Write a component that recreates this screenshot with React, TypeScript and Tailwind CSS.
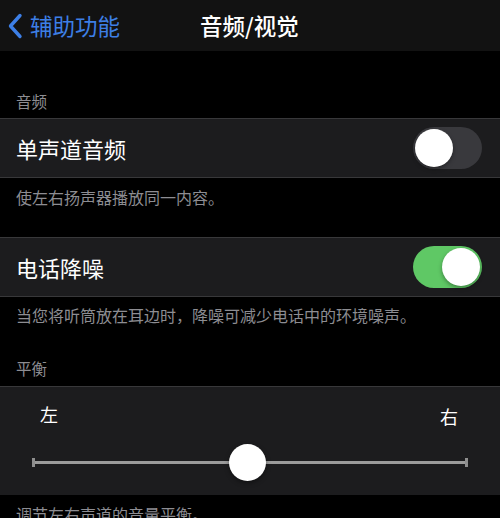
import React from 'react';

const font = { fontFamily: '"Noto Sans CJK SC", "Noto Sans", sans-serif' };

function Toggle({ on }: { on: boolean }) {
  return (
    <div
      className={`w-[69px] h-[42px] rounded-full p-[2px] flex items-center ${
        on ? 'bg-[#5fc865] justify-end' : 'bg-[#39393d] justify-start'
      }`}
    >
      <div className="w-[38px] h-[38px] rounded-full bg-white shadow-[0_2px_4px_rgba(0,0,0,0.35)]" />
    </div>
  );
}

function SwitchRow({ label, on }: { label: string; on: boolean }) {
  return (
    <div className="h-[60px] bg-[#1c1c1e] border-y border-[#38383a] flex items-center justify-between pl-4 pr-[18px]">
      <span className="text-[22px] text-white leading-none">{label}</span>
      <Toggle on={on} />
    </div>
  );
}

export default function App() {
  return (
    <div className="w-[500px] h-[518px] bg-black overflow-hidden" style={font}>
      {/* Nav bar */}
      <div className="h-[51px] bg-[#121212] flex items-center relative">
        <div className="flex items-center pl-[7px] gap-[6px] text-[#3d7fe6]">
          <svg width="17" height="26" viewBox="0 0 17 26" fill="none">
            <path d="M13 2.5L3.5 13L13 23.5" stroke="currentColor" strokeWidth="3.4" strokeLinecap="round" strokeLinejoin="round" />
          </svg>
          <span className="text-[22.5px] leading-none">辅助功能</span>
        </div>
        <span className="absolute left-[200px] text-[22.5px] font-medium text-white leading-none">音频/视觉</span>
      </div>

      {/* Audio section */}
      <div className="h-[67px] flex items-end pl-4 pb-[7px]">
        <span className="text-[15.5px] text-[#8d8d92] leading-5">音频</span>
      </div>
      <SwitchRow label="单声道音频" on={false} />
      <div className="h-[59px] pl-4 pt-[7px]">
        <span className="text-[16px] text-[#8d8d92] leading-5">使左右扬声器播放同一内容。</span>
      </div>
      <SwitchRow label="电话降噪" on={true} />
      <div className="h-[89px] pl-4 pt-[8px] flex flex-col justify-between pb-[8px]">
        <span className="text-[16px] text-[#8d8d92] leading-5">当您将听筒放在耳边时，降噪可减少电话中的环境噪声。</span>
        <span className="text-[15.5px] text-[#8d8d92] leading-5">平衡</span>
      </div>

      {/* Balance slider */}
      <div className="h-[109px] bg-[#1c1c1e] border-t border-[#38383a] flex flex-col px-[32px]">
        <div className="flex justify-between pt-[15px] px-[8px] text-[18px] text-white leading-6">
          <span>左</span>
          <span className="pt-[2px] pr-[2px]">右</span>
        </div>
        <div className="relative mt-[16px] h-[37px] flex items-center">
          <div className="w-[3px] h-[9px] bg-[#8e8e8e]" />
          <div className="flex-1 h-[3px] bg-[#9b9b9b]" />
          <div className="w-[3px] h-[9px] bg-[#8e8e8e]" />
          <div className="absolute left-[197px] top-0 w-[37px] h-[37px] rounded-full bg-white shadow-[0_2px_5px_rgba(0,0,0,0.4)]" />
        </div>
      </div>
      <div className="pl-4 pt-[7px]">
        <span className="text-[16px] text-[#8d8d92] leading-5">调节左右声道的音量平衡。</span>
      </div>
    </div>
  );
}
